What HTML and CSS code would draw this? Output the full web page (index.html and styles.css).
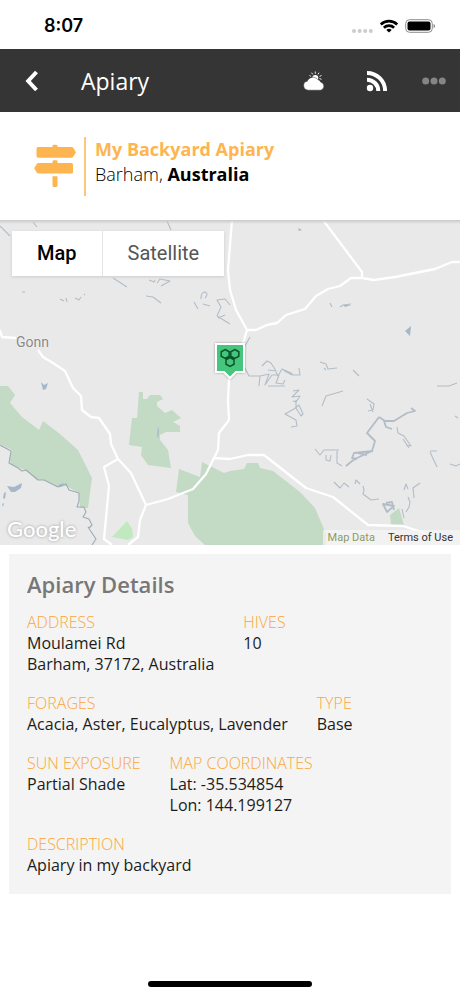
FILE: index.html
```html
<!DOCTYPE html>
<html lang="en">
<head>
<meta charset="utf-8">
<meta name="viewport" content="width=device-width, initial-scale=1">
<title>Apiary</title>
<link rel="stylesheet" href="styles.css">
</head>
<body>
<div class="status">
  <time class="clock">8:07</time>
  <div class="status-icons">
    <svg class="signal" viewBox="0 0 22 6" aria-hidden="true"><circle cx="3" cy="4" r="2"/><circle cx="8.600" cy="4" r="2"/><circle cx="14.200" cy="4" r="2"/><circle cx="19.800" cy="4" r="2"/></svg>
    <svg class="wifi" viewBox="0 0 20 14" aria-hidden="true"><path d="M1.800 5.500a11.800 11.800 0 0 1 16.400 0M4.900 8.700a7.300 7.300 0 0 1 10.200 0" fill="none" stroke="#000" stroke-width="2.700"/><path d="M10 13.400 7.300 10.900a4 4 0 0 1 5.400 0z"/></svg>
    <svg class="battery" viewBox="0 0 31 14" aria-hidden="true"><rect x=".7" y=".7" width="26.600" height="12.600" rx="3.800" fill="#fff" stroke="#8d8d8d"/><rect x="2.500" y="2.500" width="23" height="9" rx="2"/><path d="M28.600 5v4.200q1.400-.6 1.400-2.100t-1.400-2.100" fill="#777"/></svg>
  </div>
</div>

<header class="bar">
  <button class="icon-btn" aria-label="Back"><svg class="back" viewBox="0 0 14 22" aria-hidden="true"><path d="M11.500 2 3.200 11l8.300 9" fill="none" stroke="#fff" stroke-width="4"/></svg></button>
  <h1 class="bar-title">Apiary</h1>
  <button class="icon-btn" aria-label="Weather"><svg class="weather" viewBox="0 0 22 20" aria-hidden="true"><path d="M12.300 .5v2.200M8.600 1.700l1.100 1.700M16 1.700l-1.100 1.700M18.500 4.500l-2 .9M18.500 8.300l-2-.7M6.500 4.500l1.500.8" stroke="#fff" stroke-width=".9"/><circle cx="12.300" cy="7" r="3" fill="#fff"/><path d="M5 19.200a4.500 4.500 0 0 1-.8-8.900A6.200 6.200 0 0 1 14.800 8.600a4.500 4.500 0 0 1 3 2.600 4.100 4.100 0 0 1-.3 8z" fill="#fff" stroke="#353535" stroke-width=".5"/></svg></button>
  <button class="icon-btn" aria-label="Feed"><svg class="feed" viewBox="0 0 22 22" aria-hidden="true"><circle cx="4" cy="18" r="3.200" fill="#fff"/><path d="M1 9.700A11.300 11.300 0 0 1 12.300 21M1 2.900A18.100 18.100 0 0 1 19.100 21" fill="none" stroke="#fff" stroke-width="4"/></svg></button>
  <button class="icon-btn more-btn" aria-label="More"><svg class="more" viewBox="0 0 24 8" aria-hidden="true"><circle cx="3.700" cy="4" r="3.500"/><circle cx="12" cy="4" r="3.500"/><circle cx="20.300" cy="4" r="3.500"/></svg></button>
</header>

<main>
<section class="place">
  <svg class="signpost" viewBox="0 0 42 44" aria-hidden="true"><path d="M18.500 3V2q0-1.300 1.300-1.300h2.400q1.300 0 1.300 1.300v1h14.200q.8 0 1.400.6l2.500 4.100q.5.700 0 1.400L39 13q-.6.700-1.400.7H4.200q-1.700 0-1.700-1.700V4.700Q2.500 3 4.200 3zM18.500 19v-1.500q0-1.300 1.300-1.300h2.400q1.300 0 1.300 1.300V19h14q1.500 0 1.500 1.600v7.300q0 1.600-1.500 1.600h-33q-.8 0-1.400-.6L.6 25q-.5-.7 0-1.400l2.500-4q.6-.6 1.400-.6zM18.500 32.300h5v9.200q0 1.500-1.500 1.500h-2q-1.500 0-1.500-1.500z"/></svg>
  <div class="place-text">
    <h2 class="place-name">My Backyard Apiary</h2>
    <p class="place-where">Barham, <strong>Australia</strong></p>
  </div>
</section>

<section class="map" aria-label="Map of Barham">
  <svg class="map-art" viewBox="0 220 460 325" preserveAspectRatio="xMidYMid slice" aria-hidden="true">
    <g fill="#c3dac5">
      <path d="M0 386h8l7 9-5 8 12 14 17 13 4-9 17 13 18 16 14 28-4 30h-8l-1-15-13-7-8 1-13-7h-7l-13-10-13-5-3-5 3-10-12-6z"/>
      <path d="M139 392h4v7h4l3-4h10l3 4-6 3v4l8 7 7-3 9 8-8 4 7 4v6h-14l-6 3v5l8 10 3 18-23-3-7-10 1-8-13-2 3-27h5z"/>
      <path d="m179 469 21 8 2-15 22 11 6-2 14-2 3-6h11l2 5 13 3 27 21 15 16 11 26v11H205l-10-9-7-13v-28l-12-3zM390 515l9-7 5 17h-13z"/>
    </g>
    <path d="m127 521 5 8 1 8-5 3-16-3z" fill="#c1e9bf"/>
    <g fill="#a5b8ca">
      <path d="m41 382 3 3 4-2-2 6-3 1zM7 486l7 1 8-4-1 5-6 4h-4zM158 426l1 5-1 7-1-2zM405 331l6-5-1 10zM58 485l6-2-3 4zM4 493l2-1-1 7-2-1zM2 504l2-1-1 4zM298 228l4 2-3 1zM343 305l8 0-6 2z"/>
    </g>
    <g fill="none" stroke="#b3bdc7" stroke-width="1.100" stroke-linejoin="round">
      <path d="m0 445 11 6-2 12 9 5 4 3 4-1 12 10h6l14 7 8-3 3 6 10 3v8l-2 6h7l2 5-3 5 6 2 3 6-3 3M88 527l8 12-4 6" stroke="#9eabb3"/>
      <path d="m0 226 10 10M33 222l4 5M167 221l4 9M113 278l14 9M149 280l5 2 1-2M157 283l3-4 10 2-9 5M146 296l7 1 8 6M60 299l4 2M66 298l1 4M75 298l4 2 2-3M84 295l1-1M22 292h3M201 299q0-7 4-7 4 2 0 6M194 302l4 7M203 304l7 2M217 316l4-9-4-7 8-1 5 6M217 316l13 8M218 318l7-3"/>
      <path d="m250 337-5 9M245 368l4 8h11M262 366l5-5 4 2 5 8-8-1M276 372l2 4 4-7 9 4 2 2h7l-1-7M283 370l9 5M259 386l1-10 9-2-4 11 7-10h7l-3 8 7 1 2-4M268 386h17M320 362l6 2 2 5 9-1M324 368l2 2M353 370l6 6M330 303l2 4M340 307l3-2 8-1"/>
      <path d="m322 406 4-10 17-5M293 391l6-1-7 7 8-1-4 6-3-1M296 400v8l5 8 2-2-4-9-5 4-9 5 11 6 1 6-6 1M367 399l7 5-1 6-5 1M370 404l3 8M315 449l5 6 4-5h15M326 455v5l4 1 1-6M337 451v12l5 3M397 427l1 6 6 3 7 10-5-1M403 439l6 9M430 451h7M430 452l7 15M450 464l6 2 4-2M437 386l12 0 8-3M455 416l3 2M334 482l6 6 4-5 5 4M355 484l1-4 4 4M363 486l1 4-1 4 8 6 8-1M404 490l2-6 2 5M420 483l-7 5 1 10M408 497l2 5-1 5-3 5M402 509l2 9"/>
      <path d="m379 417-12 16 8 8-3 10-15 7-5 3-6 5M357 459l-5-1 2-5 19-2M358 453l9 2M379 417l6 4 9 0 13-8 8-2-4-3M384 421l2 6 6 2M383 504l11 2-7 6zM386 503l6-1 2 8" stroke-width="1.800"/>
    </g>
    <g fill="none" stroke="#fff" stroke-width="2.300" stroke-linejoin="round">
      <path d="m0 330 2 7 14 1M38 350l5 7 10 6 12 8 8 17 8 8 1 14 9 7 8 1 11 16 1 10 7 15 13 14 15 32-6 15-2 17-10 8M118 459l-14 8 5 19-5 53 8 6"/>
      <path d="m146 505 22-6 25-10 13-15 8-16 4-8 1-17 10-13-1-20 1-20 15-40 3-10-11-20-6-20-2-20 2-25 2-25M214 458l16 1 18-4h16l42 33 27 9 35 28 35 1 22 7M247 330h9l11-5 10-2 9-8 19-6 11-13 12-7 12-3 11-8h11l12 2 21-3 40-8 17-7h8M323 220l39 52v5"/>
    </g>
  </svg>
  <div class="map-types">
    <button class="map-type selected" aria-pressed="true">Map</button>
    <button class="map-type" aria-pressed="false">Satellite</button>
  </div>
  <span class="town">Gonn</span>
  <svg class="pin" viewBox="0 0 34 40" aria-hidden="true"><path d="M3 3h28v28h-8l-6 6-6-6H3z" fill="#46c67c" stroke="#fff" stroke-width="2"/><path d="m12.200 8.500 4 2.300v4.400l-4 2.300-4-2.300v-4.400zM21.800 8.500l4 2.300v4.400l-4 2.300-4-2.300v-4.400zM17 16.500l4 2.300v4.400l-4 2.300-4-2.300v-4.400z" fill="none" stroke="#0c552b" stroke-width="1.500"/></svg>
  <span class="google">Google</span>
  <div class="map-legal"><a href="#data" class="legal-data">Map Data</a><a href="#terms">Terms of Use</a></div>
</section>

<section class="details">
  <h2 class="details-title">Apiary Details</h2>
  <dl class="rows">
    <div class="row">
      <div><dt>ADDRESS</dt><dd>Moulamei Rd<br>Barham, 37172, Australia</dd></div>
      <div><dt>HIVES</dt><dd>10</dd></div>
    </div>
    <div class="row">
      <div><dt>FORAGES</dt><dd>Acacia, Aster, Eucalyptus, Lavender</dd></div>
      <div><dt>TYPE</dt><dd>Base</dd></div>
    </div>
    <div class="row">
      <div><dt>SUN EXPOSURE</dt><dd>Partial Shade</dd></div>
      <div><dt>MAP COORDINATES</dt><dd>Lat: -35.534854<br>Lon: 144.199127</dd></div>
    </div>
    <div class="row">
      <div><dt>DESCRIPTION</dt><dd>Apiary in my backyard</dd></div>
    </div>
  </dl>
</section>
</main>
<div class="home-bar"></div>
</body>
</html>
```
FILE: styles.css
```css
* { box-sizing: border-box; }
body {
  margin: 0;
  min-height: 100vh;
  display: flex;
  flex-direction: column;
  background: #fff;
  color: #1c1c1c;
  font-family: "Open Sans", "Noto Sans", sans-serif;
  font-size: 16px;
  line-height: 21px;
}
h1, h2, p, dl, dd { margin: 0; }
svg { display: block; flex: none; }
button { border: 0; padding: 0; background: none; font: inherit; cursor: pointer; }

.status {
  display: flex;
  align-items: center;
  justify-content: space-between;
  height: 49px;
  padding: 2px 24px 0 44px;
}
.clock { font: 600 18px/22px Inter, sans-serif; color: #000; }
.status-icons { display: flex; align-items: center; gap: 6px; }
.signal { width: 22px; height: 6px; fill: #ccc; margin-top: 8px; }
.wifi { width: 20px; height: 14px; }
.battery { width: 31px; height: 14px; }

.bar {
  display: flex;
  align-items: center;
  height: 63px;
  padding: 0 14px;
  background: #353535;
}
.icon-btn { display: grid; place-items: center; width: 36px; height: 44px; margin-right: 27px; }
.bar-title { flex: 1; margin-left: 4px; font-size: 23px; line-height: 30px; font-weight: 500; color: #fff; }
.back { width: 14px; height: 22px; }
.weather { width: 22px; height: 20px; }
.feed { width: 22px; height: 22px; }
.more-btn { width: 24px; margin-right: 0; }
.more { width: 24px; height: 8px; fill: #858585; }

.place {
  display: flex;
  align-items: center;
  gap: 8px;
  height: 108px;
  padding-left: 34px;
}
.signpost { width: 42px; height: 44px; fill: #feb54f; }
.place-text {
  display: flex;
  flex-direction: column;
  height: 59px;
  padding-left: 9px;
  border-left: 2px solid #fdc67c;
  color: #000;
}
.place-name { font-size: 18px; line-height: 25px; font-weight: 700; color: #feb54f; }
.place-where { font-size: 18px; line-height: 24px; font-weight: 300; }
.place-where strong { font-weight: 700; }

.map {
  position: relative;
  height: 325px;
  background: #e9e9e9;
  overflow: hidden;
  font-family: Roboto, sans-serif;
}
.map-art { width: 100%; height: 100%; }
.map::before { content: ""; position: absolute; inset: 0 0 auto; height: 4px; background: linear-gradient(#c9c9c9, transparent); }
.map-types {
  position: absolute;
  top: 11px;
  left: 12px;
  display: flex;
  background: #fff;
  box-shadow: 0 1px 3px #ccc;
}
.map-type { height: 45px; padding: 0 25px; font-size: 20px; color: #565656; }
.map-type.selected { font-weight: 500; color: #000; border-right: 1px solid #e4e4e4; }
.town { position: absolute; left: 16px; top: 113px; font-size: 14px; line-height: 18px; color: #888; text-shadow: 0 0 2px #fff; }
.pin { position: absolute; left: 50%; top: 121px; width: 34px; height: 40px; margin-left: -17px; filter: drop-shadow(0 0 1px #999); }
.google { position: absolute; left: 7px; bottom: 2px; font: 500 22px/28px Lato, sans-serif; color: #fff; text-shadow: 0 0 3px #999; }
.map-legal {
  position: absolute;
  right: 0;
  bottom: 0;
  display: flex;
  gap: 13px;
  padding: 0 7px 0 5px;
  background: rgba(245, 245, 245, .7);
  font-size: 11px;
  line-height: 15px;
}
.map-legal a { color: #333; text-decoration: none; }
.map-legal .legal-data { color: #8d9b5e; }

.details { margin: 9px; padding: 18px; background: #f4f4f4; }
.details-title { margin-bottom: 16px; font-size: 22px; line-height: 24px; font-weight: 600; color: #777; }
.rows { display: grid; gap: 18px; }
.row { display: flex; gap: 29px; }
dt { color: #fba636; font-weight: 300; }

.home-bar { width: 164px; height: 6px; margin: auto auto 9px; border-radius: 3px; background: #000; }
```
